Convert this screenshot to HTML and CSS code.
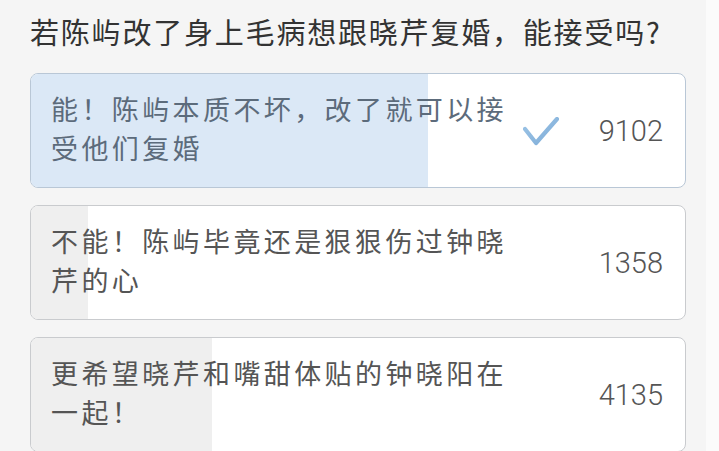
FILE: index.html
```html
<!DOCTYPE html>
<html lang="zh-CN">
<head>
<meta charset="utf-8">
<link rel="stylesheet" href="styles.css">
</head>
<body>
<div class="page">
  <h1 class="title">若陈屿改了身上毛病想跟晓芹复婚，能接受吗?</h1>
  <div class="options">
    <div class="option selected">
      <div class="fill" style="width:397px"></div>
      <div class="label">能！陈屿本质不坏，改了就可以接受他们复婚</div>
      <svg class="check" width="36" height="30" viewBox="0 0 36 30">
        <defs>
          <linearGradient id="cg" x1="0" y1="0" x2="1" y2="1">
            <stop offset="0" stop-color="#9cc4e6"/>
            <stop offset="1" stop-color="#7fadd8"/>
          </linearGradient>
        </defs>
        <path d="M2 12 L13 26 L34 2" fill="none" stroke="url(#cg)" stroke-width="4.2" stroke-linecap="round" stroke-linejoin="round"/>
      </svg>
      <div class="count">9102</div>
    </div>
    <div class="option">
      <div class="fill" style="width:57px"></div>
      <div class="label">不能！陈屿毕竟还是狠狠伤过钟晓芹的心</div>
      <div class="count">1358</div>
    </div>
    <div class="option">
      <div class="fill" style="width:181px"></div>
      <div class="label">更希望晓芹和嘴甜体贴的钟晓阳在一起！</div>
      <div class="count">4135</div>
    </div>
  </div>
</div>
</body>
</html>
```

FILE: styles.css
```css
html, body {
  margin: 0;
  padding: 0;
  background: #fbfbfb;
  height: 100%;
  overflow: hidden;
}
.page {
  width: 706px;
  height: 100%;
  background: #f5f5f5;
  padding: 11px 0 0 30px;
  box-sizing: border-box;
  font-family: "Noto Sans CJK SC", "Noto Sans", sans-serif;
}
.title {
  margin: 0 0 22px 0;
  font-size: 29px;
  line-height: 40px;
  font-weight: 400;
  letter-spacing: 1.8px;
  color: #333;
}
.options {
  display: flex;
  flex-direction: column;
  gap: 17px;
}
.option {
  position: relative;
  width: 656px;
  height: 115px;
  box-sizing: border-box;
  border: 1px solid #c9cbce;
  border-radius: 8px;
  background: #fff;
  overflow: hidden;
  display: flex;
  align-items: flex-start;
  padding: 15px 22px 15px 20px;
}
.option.selected {
  border-color: #b9c7d6;
}
.fill {
  position: absolute;
  left: 0;
  top: 0;
  bottom: 0;
  background: #efefef;
}
.selected .fill {
  background: #dbe8f6;
}
.label {
  position: relative;
  width: 470px;
  font-size: 27px;
  line-height: 39px;
  letter-spacing: 3.4px;
  color: #555;
}
.selected .label {
  color: #5c6b7b;
}
.check {
  position: relative;
  margin-left: auto;
  margin-right: 40px;
  align-self: center;
  margin-top: 2px;
}
.count {
  position: relative;
  margin-left: auto;
  align-self: center;
  font-family: "Roboto", "Liberation Sans", sans-serif;
  font-weight: 300;
  font-size: 29px;
  color: #555;
}
.check + .count {
  margin-left: 0;
}
```
